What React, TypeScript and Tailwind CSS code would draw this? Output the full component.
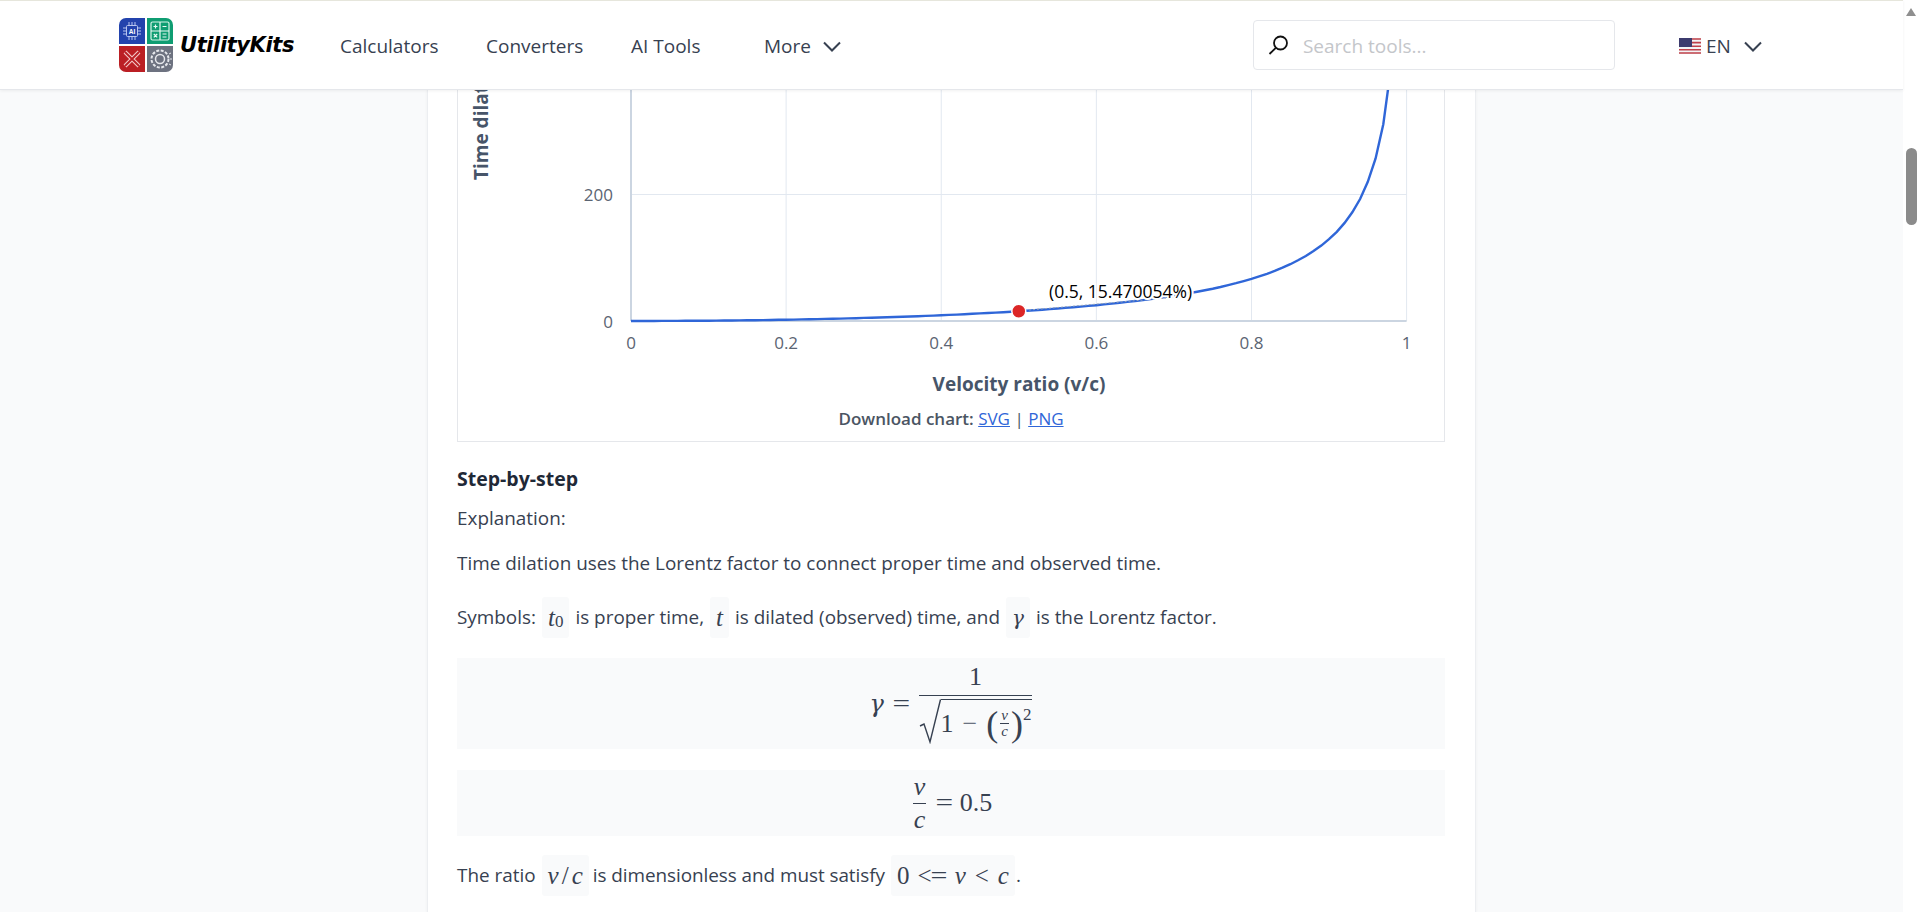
import React from "react";

const navItems = ["Calculators", "Converters", "AI Tools"];

const Chevron = () => (
  <svg width="18" height="11" viewBox="0 0 18 11" fill="none" stroke="#374151" strokeWidth="2">
    <path d="M1 1.5l8 8 8-8" />
  </svg>
);

const Logo = () => (
  <svg width="54" height="54" viewBox="0 0 54 54" className="shrink-0">
    <path d="M7 0h19v26H0V7a7 7 0 0 1 7-7z" fill="#2343ad" />
    <path d="M28 0h19a7 7 0 0 1 7 7v19H28z" fill="#0f9d72" />
    <path d="M0 28h26v26H7a7 7 0 0 1-7-7z" fill="#bb1f24" />
    <path d="M28 28h26v19a7 7 0 0 1-7 7H28z" fill="#6d7280" />
    <g fill="none" stroke="#b9c6f0" strokeWidth="1">
      <rect x="7.5" y="7.5" width="11" height="11" rx="1" />
      <path d="M10 4v3M13 4v3M16 4v3M10 19v3M13 19v3M16 19v3M4 10h3M4 13h3M4 16h3M19 10h3M19 13h3M19 16h3" />
    </g>
    <text x="13" y="15.5" textAnchor="middle" fontSize="6.5" fontWeight="700" fill="#fff" fontFamily="Liberation Sans, sans-serif">AI</text>
    <rect x="32" y="4" width="18" height="18" rx="1.5" fill="none" stroke="#d5f3e8" strokeWidth="1.2" />
    <path d="M41 4v18M32 13h18M34.5 8.5h4M36.5 6.5v4M43.5 8.5h4M34.8 16l3.4 3.4M38.2 16l-3.4 3.4M43.5 16h4M43.5 19h4" stroke="#eafaf4" strokeWidth="1.2" />
    <g stroke="#f3c9c9" fill="none">
      <path d="M6 34l14 14M20 34L6 48" strokeWidth="4" />
      <path d="M6 34l14 14M20 34L6 48" strokeWidth="1.8" stroke="#bb1f24" />
    </g>
    <g fill="none" stroke="#e5e7eb">
      <circle cx="41" cy="41" r="4.5" strokeWidth="1.5" />
      <circle cx="41" cy="41" r="8.5" strokeWidth="2" strokeDasharray="3 1.5" />
      <path d="M50 36l2-1M51 41h2M50 46l2 1" strokeWidth="1" />
    </g>
  </svg>
);

const Flag = () => (
  <svg width="22" height="16" viewBox="0 0 22 16" className="shrink-0">
    <rect width="22" height="16" fill="#f3f4f6" />
    <path d="M0 1h22M0 4.6h22M0 8.2h22M0 11.8h22M0 15h22" stroke="#c0404a" strokeWidth="1.6" />
    <rect width="13" height="9" fill="#3c3b6e" />
  </svg>
);

const Header = () => (
  <header className="relative z-10 -mb-px flex h-[90px] shrink-0 items-center border-t border-b border-t-[#e6e6dc] border-b-[#e5e7eb] bg-white pl-[119px] shadow-[0_1px_3px_rgba(0,0,0,0.06)]">
    <Logo />
    <span className="ml-[7px] w-[116px] font-['DejaVu_Sans'] text-[21px] leading-none font-bold tracking-[-0.4px] text-black italic">
      UtilityKits
    </span>
    <nav className="mt-[2px] ml-[44px] flex items-center text-[19px] font-medium text-[#374151]">
      {navItems.map((item, i) => (
        <a key={item} className={i === 0 ? "w-[146px]" : i === 1 ? "w-[145px]" : "w-[133px]"}>
          {item}
        </a>
      ))}
      <a className="flex items-center gap-[12px]">
        More <Chevron />
      </a>
    </nav>
    <div className="ml-[412px] flex h-[50px] w-[362px] items-center gap-[14px] rounded-[4px] border border-[#e5e7eb] pl-[14px]">
      <svg width="21" height="21" viewBox="0 0 21 21" fill="none" stroke="#111" strokeWidth="1.8" className="shrink-0">
        <circle cx="12.5" cy="8" r="6.5" />
        <path d="M7.8 12.8L1.5 19" />
      </svg>
      <span className="mt-[2px] text-[19px] text-[#c4c6ca]">Search tools...</span>
    </div>
    <div className="mt-[2px] ml-[64px] flex items-center gap-[5px] text-[19px] font-medium text-[#374151]">
      <Flag />
      EN
      <span className="ml-[8px]">
        <Chevron />
      </span>
    </div>
  </header>
);

// lorentz curve mapped to the chart's pixels
const X0 = 173;
const X1 = 948.6;
const Y0 = 232;
const px = (v: number) => X0 + (X1 - X0) * v;
const py = (p: number) => Y0 - p * 0.632;
const gamma = (v: number) => 1 / Math.sqrt(1 - v * v);

const curve = Array.from({ length: 99 }, (_, i) => i * 0.01)
  .map((v) => `${px(v).toFixed(1)},${py((gamma(v) - 1) * 100).toFixed(1)}`)
  .join(" ");

const Chart = () => (
  <svg width="986" height="316" viewBox="0 0 986 316" className="block font-['Open_Sans']">
    {[0.2, 0.4, 0.6, 0.8, 1].map((v) => (
      <line key={v} x1={px(v)} x2={px(v)} y1="0" y2={Y0} stroke="#e2e8f0" />
    ))}
    <line x1={X0} x2={X1} y1="105.5" y2="105.5" stroke="#e2e8f0" />
    <line x1={X0} x2={X0} y1="0" y2={Y0} stroke="#cbd5e1" strokeWidth="2" />
    <line x1={X0} x2={X1} y1={Y0} y2={Y0} stroke="#cbd5e1" strokeWidth="2" />
    <polyline points={curve} fill="none" stroke="#2f66d8" strokeWidth="2.4" />
    <path d="M571 221L708 209" stroke="#94a3b8" strokeWidth="1" strokeDasharray="2 2" />
    <circle cx={px(0.5)} cy={py(15.47)} r="7" fill="#dc2626" stroke="#fff" strokeWidth="1.5" />
    <text x="591" y="209" fontSize="17.5" fill="#000" stroke="#fff" strokeWidth="4" paintOrder="stroke">
      (0.5, 15.470054%)
    </text>
    {[
      ["0", 0],
      ["0.2", 0.2],
      ["0.4", 0.4],
      ["0.6", 0.6],
      ["0.8", 0.8],
      ["1", 1],
    ].map(([label, v]) => (
      <text key={label} x={px(v as number)} y="260" fontSize="17" textAnchor="middle" fill="#5b6472">
        {label}
      </text>
    ))}
    <text x="155" y="112" fontSize="17" textAnchor="end" fill="#5b6472">200</text>
    <text x="155" y="239" fontSize="17" textAnchor="end" fill="#5b6472">0</text>
    <text transform="translate(30 91) rotate(-90)" fontSize="19" fontWeight="700" fill="#475569">
      Time dilation (%)
    </text>
    <text x="561" y="302" fontSize="19" fontWeight="700" textAnchor="middle" fill="#475569">
      Velocity ratio (v/c)
    </text>
  </svg>
);

const Pill = ({ children }: { children: React.ReactNode }) => (
  <span className="mx-[6px] inline-flex h-[41px] items-center rounded-[3px] bg-[#f9fafb] px-[6px] align-middle font-['Liberation_Serif'] text-[25px] leading-none text-[#374151]">
    {children}
  </span>
);

const Equals = () => <span className="inline-block scale-x-[1.2]">=</span>;

const Fraction = ({ top, bottom, small }: { top: React.ReactNode; bottom: React.ReactNode; small?: boolean }) => (
  <span className={small ? "mx-[2px] inline-flex flex-col items-center text-[15px] leading-[15px]" : "mx-[3px] inline-flex flex-col items-center"}>
    <span className={small ? "border-b border-[#374151] px-[1px]" : "border-b border-[#374151] px-[1px] pb-[3px]"}>{top}</span>
    <span className={small ? "" : "pt-[3px]"}>{bottom}</span>
  </span>
);

const MathBlock = ({ h, children }: { h: string; children: React.ReactNode }) => (
  <div className={`flex ${h} items-center justify-center bg-[#f9fafb] font-['Liberation_Serif'] text-[26px] leading-none text-[#374151]`}>
    {children}
  </div>
);

const GammaFormula = () => (
  <div className="flex items-center">
    <i className="mr-[10px] font-['DejaVu_Serif'] text-[24px]">γ</i>
    <span className="mr-[10px]">
      <Equals />
    </span>
    <span className="inline-flex flex-col items-center">
      <span className="w-full border-b border-[#374151] pb-[5px] text-center">1</span>
      <span className="flex h-[48px] items-stretch pt-[3px]">
        <svg width="22" height="45" viewBox="0 0 22 45" fill="none" stroke="#374151" className="shrink-0">
          <path d="M1 27l4-2 6 18L21.5 0.5" strokeWidth="1.4" />
        </svg>
        <span className="flex items-center border-t border-[#374151] pt-[4px] pr-[1px]">
          1
          <span className="mx-[9px] text-[#6b7280]">−</span>
          <span className="text-[36px] leading-none font-light">(</span>
          <Fraction small top={<i>v</i>} bottom={<i>c</i>} />
          <span className="text-[36px] leading-none font-light">)</span>
          <span className="mb-[18px] text-[17px]">2</span>
        </span>
      </span>
    </span>
  </div>
);

const Scrollbar = () => (
  <div className="flex w-[17px] shrink-0 flex-col items-center bg-white pt-[8px] pr-[1px]">
    <div className="h-0 w-0 border-x-[5px] border-b-[8px] border-x-transparent border-b-[#8f8f8f]" />
    <div className="mt-[132px] h-[77px] w-[11px] rounded-full bg-[#8b8b8b]" />
  </div>
);

export default function App() {
  return (
    <div className="flex h-[912px] w-[1920px] overflow-hidden bg-[#f9fafb] font-['Open_Sans',sans-serif]">
      <div className="flex min-w-0 flex-1 flex-col">
        <Header />
        <main className="flex flex-1 justify-center overflow-hidden">
          <section className="w-[1049px] shrink-0 border-x border-[#eceef1] bg-white pr-[30px] pl-[29px] shadow-[0_1px_3px_rgba(0,0,0,0.05)]">
            <div className="h-[353px] border-x border-b border-[#e5e7eb]">
              <Chart />
              <p className="mt-[2px] text-center text-[17px] leading-[24px] font-semibold text-[#4b5563]">
                Download chart: <a className="font-normal text-[#2f66d8] underline">SVG</a>{" "}
                <span className="font-normal">|</span> <a className="font-normal text-[#2f66d8] underline">PNG</a>
              </p>
            </div>
            <h3 className="mt-[24px] text-[19.5px] leading-[26px] font-bold text-[#1f2937]">Step-by-step</h3>
            <p className="mt-[13px] text-[18.9px] leading-[26px] text-[#374151]">Explanation:</p>
            <p className="mt-[19px] text-[18.9px] leading-[26px] text-[#374151]">
              Time dilation uses the Lorentz factor to connect proper time and observed time.
            </p>
            <p className="mt-[21px] flex h-[41px] items-center text-[18.9px] text-[#374151]">
              Symbols:
              <Pill>
                <i>t</i>
                <span className="mt-[8px] text-[17px]">0</span>
              </Pill>
              is proper time,
              <Pill>
                <i>t</i>
              </Pill>
              is dilated (observed) time, and
              <Pill>
                <i className="font-['DejaVu_Serif'] text-[20px]">γ</i>
              </Pill>
              is the Lorentz factor.
            </p>
            <div className="mt-[20px]">
              <MathBlock h="h-[91px]">
                <GammaFormula />
              </MathBlock>
            </div>
            <div className="mt-[21px]">
              <MathBlock h="h-[66px]">
                <Fraction top={<i>v</i>} bottom={<i>c</i>} />
                <span className="mx-[8px]">
                  <Equals />
                </span>
                0.5
              </MathBlock>
            </div>
            <p className="mt-[19px] flex h-[41px] items-center text-[18.9px] text-[#374151]">
              The ratio
              <Pill>
                <i>v</i>
                <span className="mx-[3px]">/</span>
                <i>c</i>
              </Pill>
              <span className="-ml-[2px] tracking-[-0.05px]">is dimensionless and must satisfy</span>
              <Pill>
                0<span className="ml-[8px]">&lt;</span>
                <Equals />
                <i className="mx-[9px]">v</i>&lt;<i className="ml-[9px]">c</i>
              </Pill>
              <span className="-ml-[5px]">.</span>
            </p>
          </section>
        </main>
      </div>
      <Scrollbar />
    </div>
  );
}
